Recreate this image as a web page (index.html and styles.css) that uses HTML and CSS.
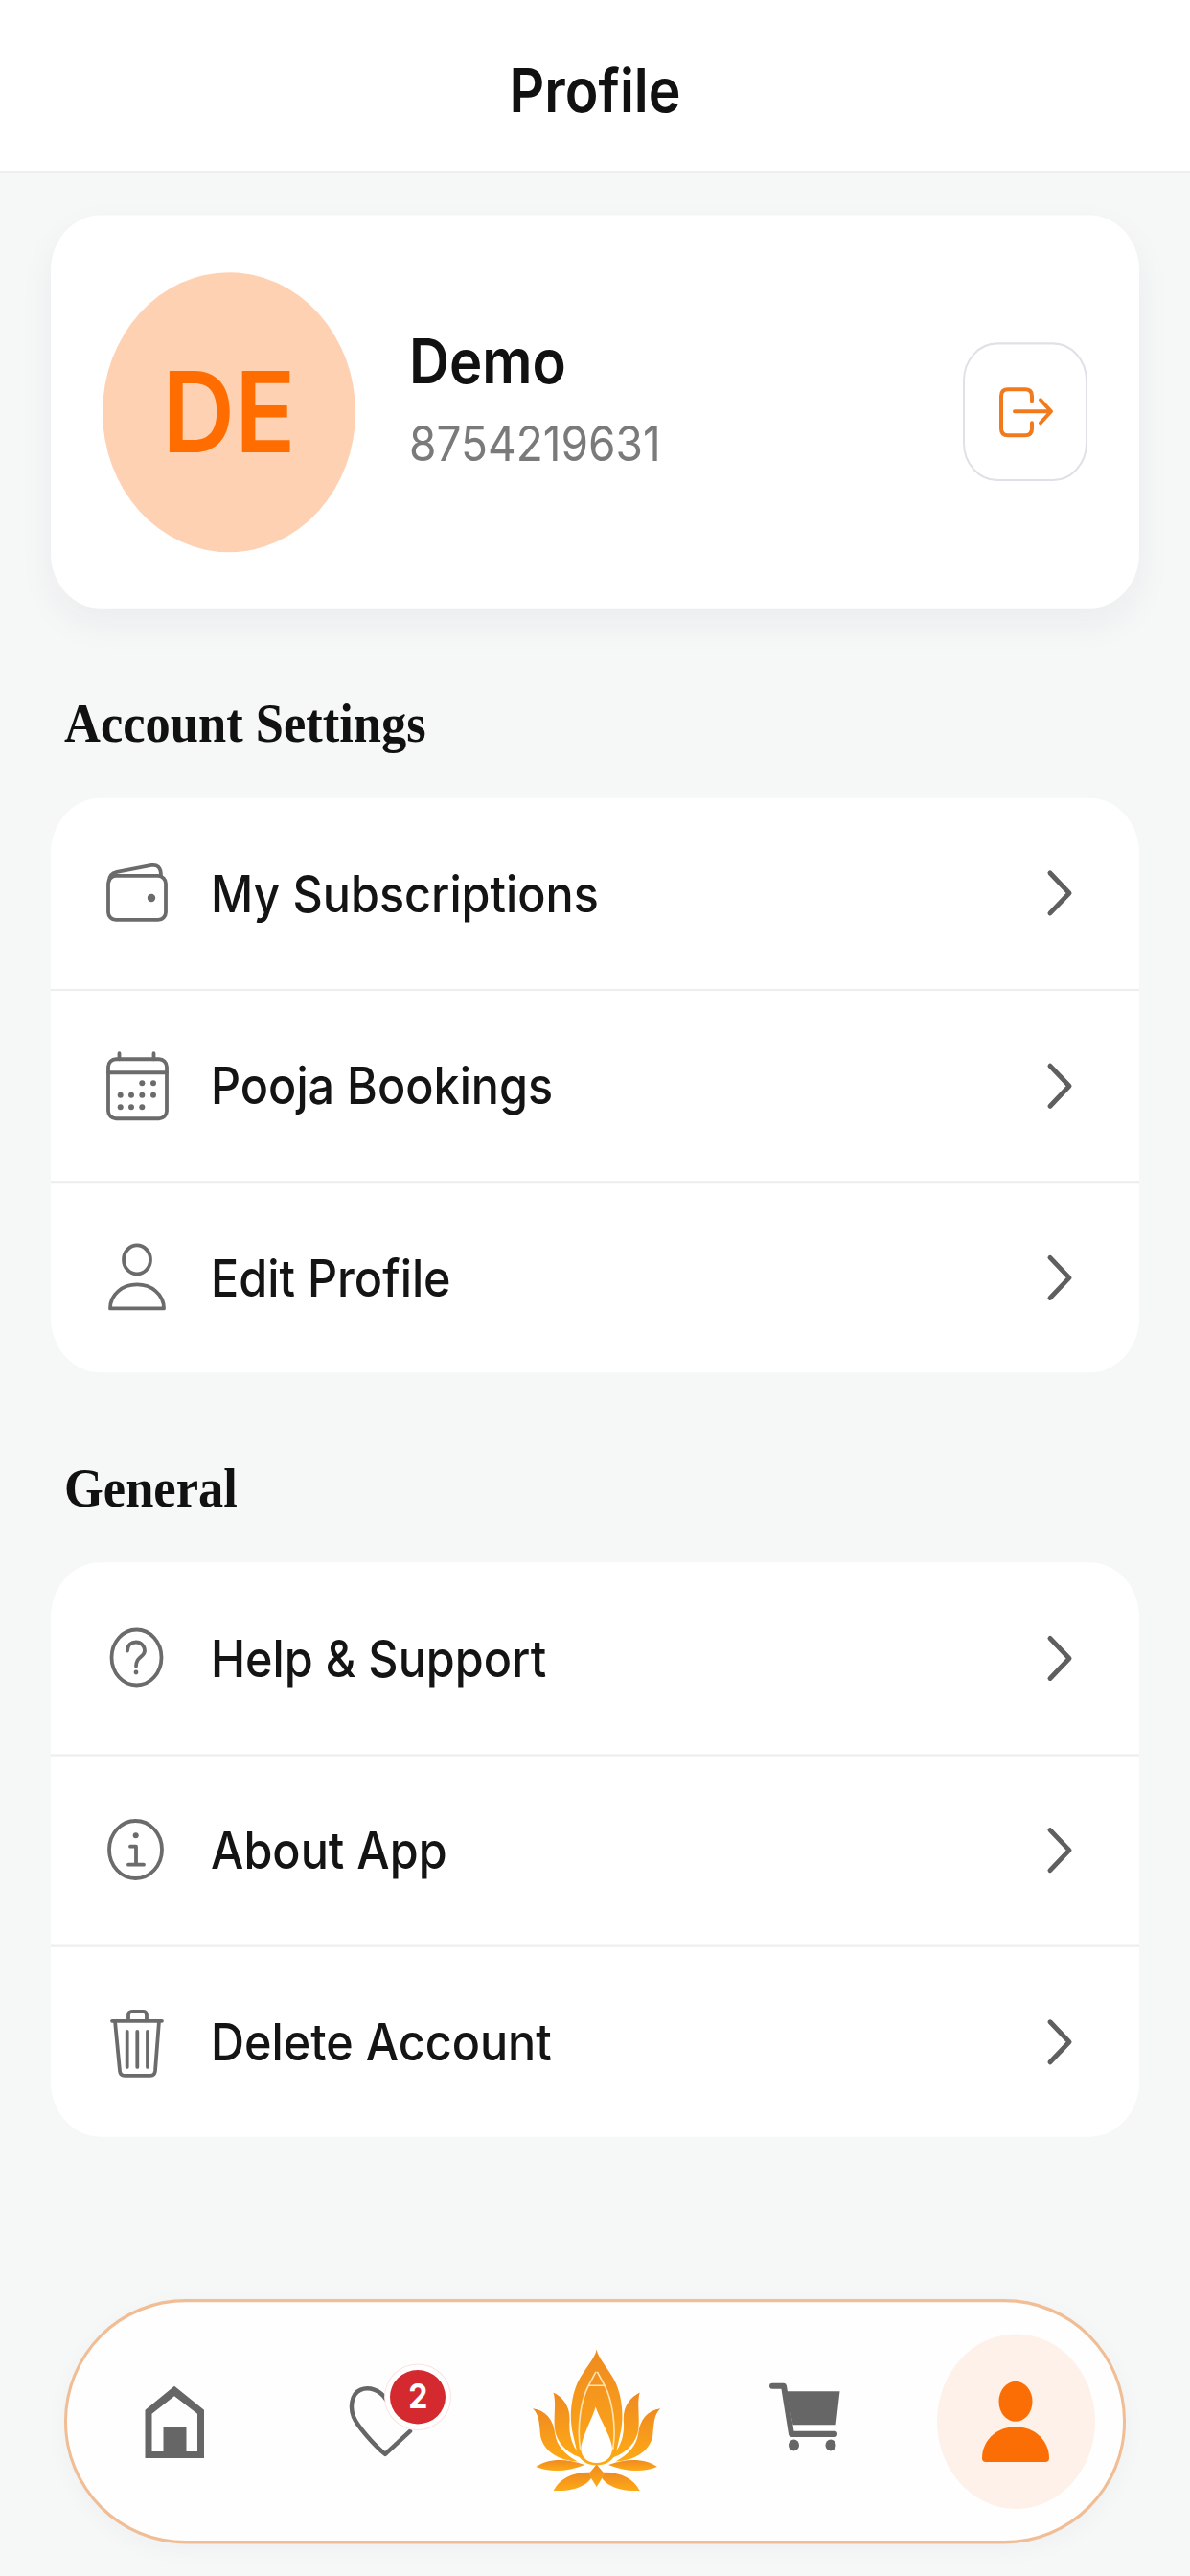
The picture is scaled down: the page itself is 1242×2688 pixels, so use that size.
FILE: index.html
```html
<!DOCTYPE html>
<html lang="en">
<head>
<meta charset="utf-8">
<title>Profile</title>
<link rel="stylesheet" href="styles.css">
</head>
<body>
<div class="page">
  <header class="topbar"><h1 class="topbar-title">Profile</h1></header>
  <main class="content">
    <section class="card profile-card">
      <div class="avatar">DE</div>
      <div class="profile-info">
        <div class="profile-name">Demo</div>
        <div class="profile-phone">8754219631</div>
      </div>
      <button class="logout">
        <svg class="logout-icon" viewBox="0 0 60 60" preserveAspectRatio="none" fill="none" stroke="#f07a1c" stroke-width="4" stroke-linecap="round" stroke-linejoin="round"><path d="M37 19V14Q37 7 30 7H12Q5 7 5 14V48Q5 55 12 55H30Q37 55 37 48V42"/><path d="M19 30H56M46 18L57 30L46 42"/></svg>
      </button>
    </section>

    <h2 class="section-title">Account Settings</h2>
    <section class="card menu">
      <div class="row">
        <svg class="row-icon" viewBox="0 0 66 70" preserveAspectRatio="none"><rect x="3" y="17" width="60" height="46" rx="8"/><path d="M4 22C4 16 8 14 12 13L48 6C54 5 58 8 58 17"/><circle class="dot" cx="48" cy="40" r="4.2"/></svg>
        <span class="row-label">My Subscriptions</span>
        <svg class="chevron" viewBox="0 0 30 50" preserveAspectRatio="none"><path d="M5 4L25 25L5 46"/></svg>
      </div>
      <div class="row">
        <svg class="row-icon" viewBox="0 0 66 70" preserveAspectRatio="none"><rect x="3" y="7" width="61" height="62" rx="8"/><path d="M3 21H64M14.500 1V7M50.500 1V7"/><g class="dot"><circle cx="38.300" cy="32" r="3"/><circle cx="50" cy="32" r="3"/><circle cx="15.700" cy="44.500" r="3"/><circle cx="27" cy="44.500" r="3"/><circle cx="38.300" cy="44.500" r="3"/><circle cx="50" cy="44.500" r="3"/><circle cx="15.700" cy="57" r="3"/><circle cx="27" cy="57" r="3"/><circle cx="38.300" cy="57" r="3"/></g></svg>
        <span class="row-label">Pooja Bookings</span>
        <svg class="chevron" viewBox="0 0 30 50" preserveAspectRatio="none"><path d="M5 4L25 25L5 46"/></svg>
      </div>
      <div class="row">
        <svg class="row-icon" viewBox="0 0 66 70" preserveAspectRatio="none"><ellipse cx="33" cy="16" rx="14" ry="15"/><path d="M5 67C5 52 18 42 33 42C48 42 61 52 61 67Z"/></svg>
        <span class="row-label">Edit Profile</span>
        <svg class="chevron" viewBox="0 0 30 50" preserveAspectRatio="none"><path d="M5 4L25 25L5 46"/></svg>
      </div>
    </section>

    <h2 class="section-title">General</h2>
    <section class="card menu menu-compact">
      <div class="row">
        <svg class="row-icon" viewBox="0 0 66 70" preserveAspectRatio="none"><ellipse cx="32.500" cy="34" rx="26" ry="29"/><path d="M23 27C23 21 27 18 32 18C37 18 41 22 41 27C41 32 36 33 33.500 37C32.500 39 32 41 32 43"/><circle class="dot" cx="32" cy="49.500" r="2.400"/></svg>
        <span class="row-label">Help &amp; Support</span>
        <svg class="chevron" viewBox="0 0 30 50" preserveAspectRatio="none"><path d="M5 4L25 25L5 46"/></svg>
      </div>
      <div class="row">
        <svg class="row-icon" viewBox="0 0 66 70" preserveAspectRatio="none"><ellipse cx="31.500" cy="34.300" rx="27.500" ry="30"/><circle class="dot" cx="31.700" cy="19.500" r="3"/><path d="M26 31H32V50M24 50H40"/></svg>
        <span class="row-label">About App</span>
        <svg class="chevron" viewBox="0 0 30 50" preserveAspectRatio="none"><path d="M5 4L25 25L5 46"/></svg>
      </div>
      <div class="row">
        <svg class="row-icon" viewBox="0 0 66 70" preserveAspectRatio="none"><path d="M7 13H59M24 13V7Q24 3 28 3H39Q43 3 43 7V13M10 13L15 65Q15.500 70 20 70H47Q51.500 70 52 65L56 13M22.700 24V61M33.300 24V61M44 24V61"/></svg>
        <span class="row-label">Delete Account</span>
        <svg class="chevron" viewBox="0 0 30 50" preserveAspectRatio="none"><path d="M5 4L25 25L5 46"/></svg>
      </div>
    </section>
  </main>

  <nav class="tabbar">
    <div class="tab">
      <svg class="tab-icon" viewBox="0 0 80 90" preserveAspectRatio="none"><path class="fill-grey" fill-rule="evenodd" d="M40 8L71 33V83H9.500V33ZM40 18.500L16.500 37V76H28.500V50.500H52.500V76H64V37Z"/></svg>
    </div>
    <div class="tab">
      <span class="tab-slot">
        <svg class="tab-icon" viewBox="0 0 80 90" preserveAspectRatio="none"><path d="M42 22C36 12 24 8 15 12C6 16 4 30 8 40C12 50 30 70 41 79L67 55" fill="none" stroke="#666" stroke-width="4.500" stroke-linecap="round" stroke-linejoin="round"/></svg>
        <span class="badge"><span class="badge-count">2</span></span>
      </span>
    </div>
    <div class="tab">
      <svg class="lotus" viewBox="0 0 540 540" preserveAspectRatio="none">
        <defs>
          <linearGradient id="gold" x1="0" y1="0" x2="0" y2="1"><stop offset="0" stop-color="#ee8a20"/><stop offset="0.5" stop-color="#f79a1c"/><stop offset="1" stop-color="#fdaa14"/></linearGradient>
          <g id="petals">
            <path d="M140 200C170 215 195 245 190 295C188 335 200 375 232 405C188 395 152 360 145 320C138 280 150 240 140 200Z"/>
            <path d="M75 250C115 255 140 285 145 330C150 365 175 395 216 416C155 412 112 385 100 340C95 300 97 270 75 250Z"/>
            <path d="M85 432C120 410 170 402 238 426C190 446 130 452 85 432Z"/>
            <path d="M140 507C160 470 200 446 264 450C262 482 212 512 140 507Z"/>
          </g>
        </defs>
        <g fill="url(#gold)">
          <use href="#petals"/>
          <use href="#petals" transform="matrix(-1 0 0 1 550 0)"/>
          <path d="M275 65C280 95 310 120 335 170C355 215 362 280 348 335L335 392C322 418 300 428 275 428C250 428 228 418 215 392L202 335C188 280 195 215 215 170C240 120 270 95 275 65Z"/>
          <path d="M275 425L300 455L275 495L250 455Z"/>
        </g>
        <path d="M272 245C260 285 228 340 226 375C226 405 250 420 275 420C300 420 324 405 324 375C322 340 285 285 272 245Z" fill="#fff"/>
        <path d="M273 135L250 178C228 220 212 300 224 378M277 135L300 178C322 220 338 300 326 378M250 178H300" fill="none" stroke="#fde3b5" stroke-width="5"/>
      </svg>
    </div>
    <div class="tab">
      <svg class="tab-icon" viewBox="0 0 80 90" preserveAspectRatio="none"><path d="M5 8H17L25 58H70" fill="none" stroke="#666" stroke-width="6" stroke-linecap="round" stroke-linejoin="round"/><path class="fill-grey" d="M20 13.500H75.500L71.500 48.500H26.500Z"/><ellipse class="fill-grey" cx="27.500" cy="69.500" rx="5.500" ry="6"/><ellipse class="fill-grey" cx="66" cy="69.500" rx="5.500" ry="6"/></svg>
    </div>
    <div class="tab">
      <span class="tab-active">
        <svg class="tab-icon" viewBox="0 0 80 90" preserveAspectRatio="none"><ellipse class="fill-orange" cx="40" cy="24" rx="17.500" ry="21"/><path class="fill-orange" d="M5 83C5 65 20 50.500 40 50.500C60 50.500 75 65 75 83Q75 87 71 87H9Q5 87 5 83Z"/></svg>
      </span>
    </div>
  </nav>
</div>
</body>
</html>
```
FILE: styles.css
```css
* { box-sizing: border-box; }
html, body { margin: 0; padding: 0; width: 1242px; height: 2688px; overflow: hidden; background: #f6f7f7; }

/* The capture is stretched vertically by 1.106; the page is built at its natural size and stretched the same way. */
.page {
  width: 1242px;
  height: 2431px;
  transform: scaleY(1.106);
  transform-origin: top left;
  font-family: Inter, "Liberation Sans", sans-serif;
  color: #111;
}

.topbar {
  height: 163px;
  padding-top: 10px;
  background: #fff;
  border-bottom: 2px solid #eeeeee;
  display: flex;
  align-items: center;
  justify-content: center;
}
.topbar-title { margin: 0; font-size: 57px; font-weight: 600; }

.content { padding: 40px 53px 0; }

.card { background: #fff; border-radius: 52px; }

.profile-card {
  height: 371px;
  padding: 0 54px;
  display: flex;
  align-items: center;
  box-shadow: 0 14px 36px rgba(30, 40, 50, 0.05);
}
.avatar {
  width: 264px;
  height: 264px;
  border-radius: 50%;
  background: #ffd1b3;
  color: #ff6d00;
  font-size: 105px;
  font-weight: 600;
  display: flex;
  align-items: center;
  justify-content: center;
  flex: none;
}
.profile-info { margin-left: 56px; flex: 1; display: flex; flex-direction: column; gap: 19px; padding-bottom: 21px; }
.profile-name { font-size: 58px; font-weight: 600; line-height: 60px; }
.profile-phone { font-size: 46px; color: #7a7a7a; line-height: 56px; }

.logout {
  width: 130px;
  height: 131px;
  padding: 0;
  background: #fff;
  border: 2.500px solid #dfe1e6;
  border-radius: 36px;
  display: flex;
  align-items: center;
  justify-content: center;
  flex: none;
}
.logout-icon { width: 60px; height: 54.250px; }

.section-title {
  margin: 0;
  height: 179px;
  padding: 0 0 47px 14px;
  display: flex;
  align-items: flex-end;
  font-family: "Liberation Serif", serif;
  font-size: 52.500px;
  line-height: 48px;
  font-weight: 700;
  color: #111;
}

.menu { overflow: hidden; }
.row {
  height: 181px;
  padding: 0 68px 0 57px;
  display: flex;
  align-items: center;
}
.row:first-child { height: 180px; }
.menu-compact .row { height: 180.500px; }
.row + .row { border-top: 2.500px solid #eeeeee; }
.row-icon {
  width: 66px;
  height: 63.300px;
  flex: none;
  fill: none;
  stroke: #6b6b6b;
  stroke-width: 3.800;
  stroke-linecap: round;
  stroke-linejoin: round;
  overflow: visible;
}
.row-icon .dot { fill: #6b6b6b; stroke: none; }
.row-label { margin-left: 44px; flex: 1; font-size: 48.500px; font-weight: 500; color: #141414; }
.chevron {
  width: 30px;
  height: 45.200px;
  flex: none;
  fill: none;
  stroke: #5f5f5f;
  stroke-width: 5;
  stroke-linecap: round;
  stroke-linejoin: round;
}

.tabbar {
  width: 1108px;
  height: 231.500px;
  margin: 153px 0 0 67px;
  padding: 0 2px;
  background: #fefefe;
  border: 3px solid #f0bd94;
  border-radius: 127px / 115px;
  display: grid;
  grid-template-columns: repeat(5, 1fr);
  box-shadow: 0 6px 24px rgba(30, 40, 50, 0.03);
}
.tab { display: flex; align-items: center; justify-content: center; }
.tab-slot { position: relative; display: flex; }
.tab-icon { width: 80px; height: 81.400px; display: block; }
.fill-grey { fill: #666; }
.fill-orange { fill: #fb6e05; }
.lotus { width: 180px; height: 162.750px; margin-bottom: 11px; }
.tab-active {
  width: 165px;
  height: 165px;
  border-radius: 50%;
  background: #fdf1ea;
  display: flex;
  align-items: center;
  justify-content: center;
}
.badge {
  position: absolute;
  left: 41px;
  top: -13px;
  width: 68px;
  height: 61px;
  border-radius: 50%;
  background: #d42a2f;
  border: 5px solid #fff;
  box-shadow: 0 0 0 1px #fbe3e3;
  display: flex;
  align-items: center;
  justify-content: center;
}
.badge-count { color: #fff; font-size: 32px; font-weight: 700; line-height: 1; }
```
